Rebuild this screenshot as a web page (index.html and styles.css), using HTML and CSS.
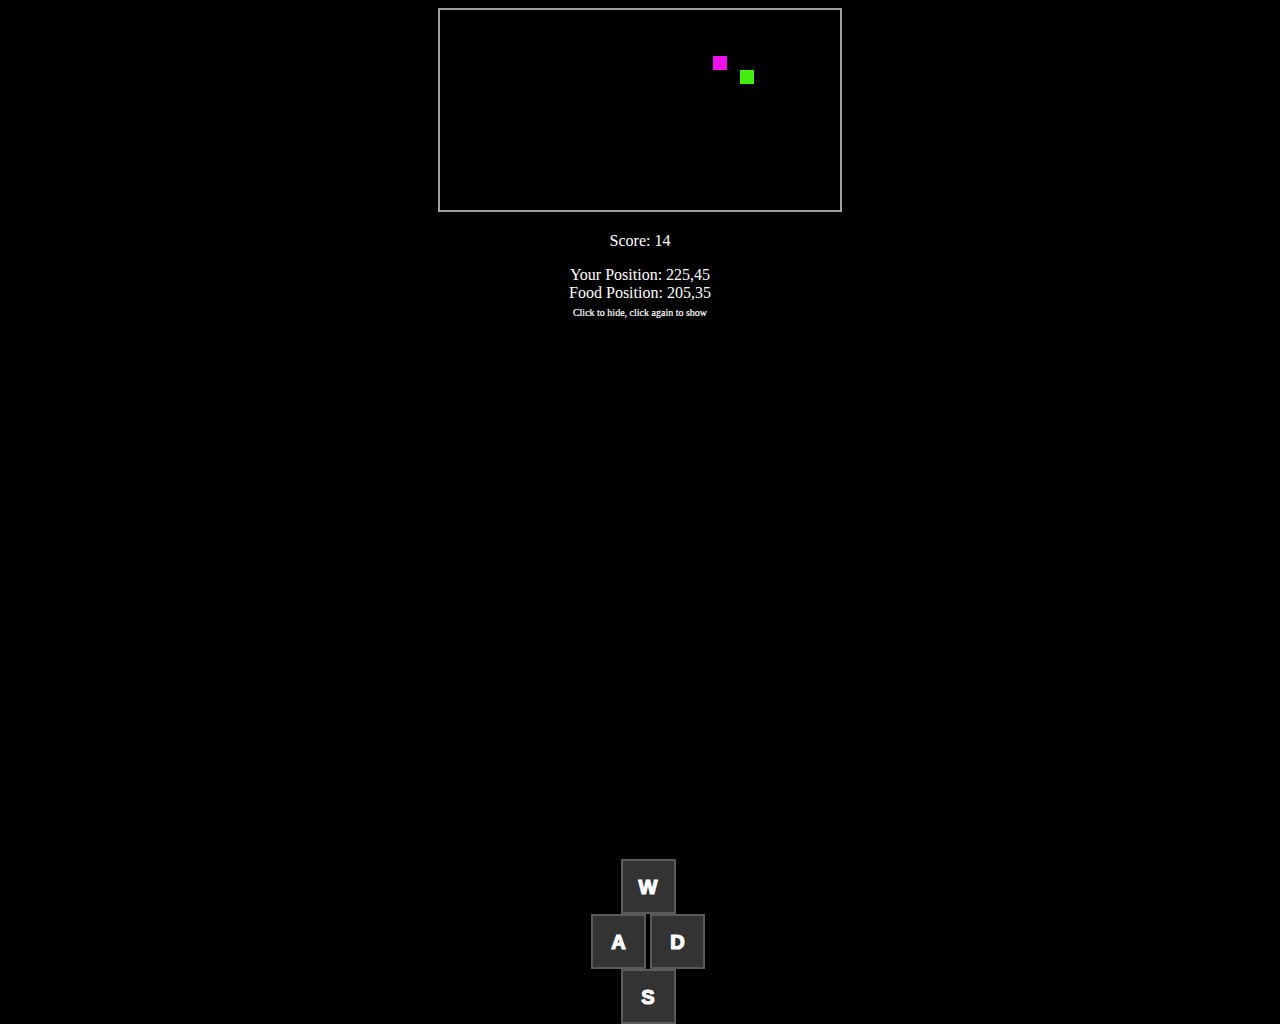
FILE: index.html
```html
<!DOCTYPE html>
<html>
<head>
<meta charset="utf-8">
<title>Snake</title>
<link rel="stylesheet" href="styles.css">
</head>
<body>
<div class="page">
  <div class="board">
    <div class="cell snake" style="left:273px;top:46px"></div>
    <div class="cell food" style="left:300px;top:60px"></div>
  </div>
  <p class="score">Score: 14</p>
  <div class="info">
    <div>Your Position: 225,45</div>
    <div>Food Position: 205,35</div>
    <div class="hint">Click to hide, click again to show</div>
  </div>
  <div class="pad">
    <div class="row"><div class="key">W</div></div>
    <div class="row"><div class="key">A</div><div class="key">D</div></div>
    <div class="row"><div class="key">S</div></div>
  </div>
</div>
</body>
</html>
```
FILE: styles.css
```css
html, body {
  margin: 0;
  padding: 0;
  background: #000;
  color: #fff;
  font-family: "Liberation Serif", "Times New Roman", serif;
  font-size: 16px;
}
.page {
  height: 1024px;
  box-sizing: border-box;
  padding-top: 8px;
  display: flex;
  flex-direction: column;
  align-items: center;
  overflow: hidden;
}
.board {
  position: relative;
  width: 400px;
  height: 200px;
  border: 2px solid #a0a0a0;
  background: #000;
  flex: none;
}
.cell {
  position: absolute;
  width: 14px;
  height: 14px;
}
.snake { background: #ee11ee; }
.food { background: #44ee11; }
.score {
  margin: 20px 0 0;
  line-height: 18px;
}
.info {
  margin-top: 16px;
  line-height: 18px;
  text-align: center;
}
.hint {
  font-size: 10px;
  line-height: 18px;
  padding-top: 2px;
  -webkit-text-stroke: 0.2px #fff;
}
.pad {
  margin-top: auto;
  padding-left: 16px;
  display: flex;
  flex-direction: column;
  align-items: center;
}
.row {
  display: flex;
  gap: 4px;
}
.key {
  width: 55px;
  height: 55px;
  box-sizing: border-box;
  padding-top: 2px;
  background: #333;
  border: 2px solid #5a5a5a;
  display: flex;
  align-items: center;
  justify-content: center;
  font-family: "Liberation Sans", Arial, sans-serif;
  font-weight: bold;
  font-size: 20px;
  -webkit-text-stroke: 1.2px #fff;
  color: #fff;
}
```
